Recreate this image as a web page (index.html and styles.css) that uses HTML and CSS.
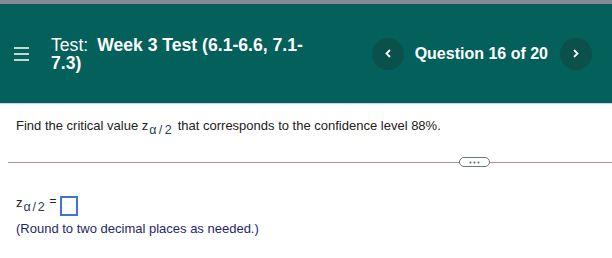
FILE: index.html
```html
<!DOCTYPE html>
<html lang="en">
<head>
  <meta charset="UTF-8">
  <title>Question 16 of 20</title>
  <link rel="stylesheet" href="styles.css">
</head>
<body>
  <div class="top-strip"></div>
  <header class="quiz-header">
    <button class="menu-btn" aria-label="Menu">
      <svg width="15" height="14" viewBox="0 0 15 14"><path d="M0 1h15M0 7h15M0 13h15" stroke="#fff" stroke-width="1.6"/></svg>
    </button>
    <h1 class="test-title"><span class="label">Test:</span><span class="name">Week 3 Test (6.1-6.6, 7.1-7.3)</span></h1>
    <nav class="q-nav">
      <button class="circle-btn" aria-label="Previous">
        <svg width="6" height="9" viewBox="0 0 6 9"><path d="M5 1L1.5 4.5L5 8" fill="none" stroke="#fff" stroke-width="1.8"/></svg>
      </button>
      <span class="q-count">Question 16 of 20</span>
      <button class="circle-btn" aria-label="Next">
        <svg width="6" height="9" viewBox="0 0 6 9"><path d="M1 1L4.5 4.5L1 8" fill="none" stroke="#fff" stroke-width="1.8"/></svg>
      </button>
    </nav>
  </header>
  <main class="question">
    <p class="prompt">Find the critical value <span class="math">z<sub>α/2</sub></span> that corresponds to the confidence level 88%.</p>
    <div class="divider">
      <span class="rule first"></span>
      <button class="more-btn"><svg width="11" height="3" viewBox="0 0 11 3"><circle cx="1.5" cy="1.5" r="1" fill="#56606e"/><circle cx="5.5" cy="1.5" r="1" fill="#56606e"/><circle cx="9.5" cy="1.5" r="1" fill="#56606e"/></svg></button>
      <span class="rule"></span>
    </div>
    <div class="answer">
      <span class="math">z<sub>α/2</sub></span><span class="eq">=</span><span class="answer-box"></span>
    </div>
    <p class="note">(Round to two decimal places as needed.)</p>
  </main>
</body>
</html>
```

FILE: styles.css
```css
body {
  margin: 0;
  font-family: "Liberation Sans", Arial, sans-serif;
  background-color: #fff;
  color: #222;
}
button {
  cursor: pointer;
  font-family: inherit;
}
.top-strip {
  height: 4px;
  background-color: #868b95;
}
.quiz-header {
  height: 99px;
  background-color: #03605a;
  border-bottom: 1px solid #c9d5dd;
  display: flex;
  align-items: center;
  color: #fff;
}
.menu-btn {
  background: none;
  border: none;
  padding: 0;
  margin-left: 14px;
  width: 15px;
  height: 14px;
  display: flex;
}
.test-title {
  margin: 0 0 0 22px;
  width: 270px;
  font-size: 17.6px;
  line-height: 18px;
  font-weight: normal;
}
.test-title .label {
  margin-right: 9px;
}
.test-title .name {
  font-weight: bold;
}
.q-nav {
  margin-left: auto;
  margin-right: 20px;
  display: flex;
  align-items: center;
}
.circle-btn {
  width: 32px;
  height: 32px;
  border-radius: 50%;
  border: none;
  padding: 0;
  background-color: #0b514b;
  display: flex;
  align-items: center;
  justify-content: center;
}
.q-count {
  font-size: 16px;
  font-weight: bold;
  margin: 0 12px 0 11px;
}
.question {
  padding: 0 0 0 16px;
  font-size: 13px;
}
.prompt {
  margin: 14px 0 0 0;
  line-height: 16px;
}
.math sub {
  font-size: 12.5px;
  letter-spacing: 2.4px;
  color: #2d3a5a;
  vertical-align: -4px;
  line-height: 0;
  margin-left: 1px;
}
.divider {
  display: flex;
  align-items: center;
  margin: 23px 0 0 -8px;
}
.rule {
  flex: 1;
  height: 1px;
  background-color: #b98aa0;
}
.rule.first {
  flex: 0 0 451px;
}
.more-btn {
  width: 31px;
  height: 10px;
  padding: 0;
  border: 1px solid #6b7785;
  border-radius: 5px;
  background-color: #fff;
  display: flex;
  align-items: center;
  justify-content: center;
}
.answer {
  display: flex;
  align-items: flex-end;
  margin-top: 29px;
  height: 20px;
}
.answer .math {
  line-height: 14px;
  margin-bottom: 6px;
}
.answer .math sub {
  letter-spacing: 1.8px;
}
.eq {
  margin: 0 3px 0 3px;
  line-height: 14px;
  margin-bottom: 8px;
  font-size: 12px;
}
.answer-box {
  width: 14px;
  height: 16px;
  border: 2px solid #3d74d6;
}
.note {
  margin: 5px 0 0 0;
  line-height: 15px;
  color: #26266e;
}
```
